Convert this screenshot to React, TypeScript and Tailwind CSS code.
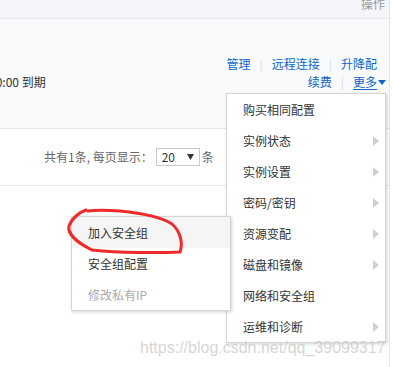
import React from "react";

const font = { fontFamily: '"Noto Sans CJK SC", "Noto Sans", sans-serif' };

function Arrow() {
  return (
    <svg width="6" height="10" viewBox="0 0 6 10" className="absolute right-[6px] top-1/2 -translate-y-1/2">
      <path d="M0 0 L6 5 L0 10 Z" fill="#d0d0d0" />
    </svg>
  );
}

const mainItems: { label: string; arrow: boolean }[] = [
  { label: "购买相同配置", arrow: false },
  { label: "实例状态", arrow: true },
  { label: "实例设置", arrow: true },
  { label: "密码/密钥", arrow: true },
  { label: "资源变配", arrow: true },
  { label: "磁盘和镜像", arrow: true },
  { label: "网络和安全组", arrow: false },
  { label: "运维和诊断", arrow: true },
];

export default function App() {
  return (
    <div className="relative w-[393px] h-[367px] overflow-hidden bg-white text-[12px]" style={font}>
      <div className="w-[390px] border-r border-[#e3e7ec] h-full">
        {/* header */}
        <div className="h-[19px] bg-[#f4f6f9] border-b border-[#e3e7ec] flex justify-end pr-[4px] overflow-hidden">
          <span className="text-[#9a9a9a] leading-[12px] -mt-[2px]">操作</span>
        </div>
        {/* row */}
        <div className="h-[110px] bg-[#f9fafc] border-b border-[#e3e7ec] flex justify-between">
          <div className="pt-[56px] overflow-hidden">
            <span className="block whitespace-nowrap ml-[-11px] text-[#333] leading-[14px]">00:00 到期</span>
          </div>
          <div className="flex flex-col items-end pt-[38px] pr-[12px] gap-[4px] leading-[14px]">
            <div className="flex items-center text-[#0e67c6]">
              <span>管理</span>
              <span className="mx-[9px] text-[#d8dce2]">|</span>
              <span>远程连接</span>
              <span className="mx-[9px] text-[#d8dce2]">|</span>
              <span>升降配</span>
            </div>
            <div className="flex items-center text-[#0e67c6] mr-[-9px]">
              <span>续费</span>
              <span className="mx-[9px] text-[#d8dce2]">|</span>
              <span className="underline underline-offset-[2px]">更多</span>
              <svg width="8" height="5" viewBox="0 0 8 5" className="ml-[1px]">
                <path d="M0 0 L8 0 L4 5 Z" fill="#0e67c6" />
              </svg>
            </div>
          </div>
        </div>
        {/* pagination */}
        <div className="h-[57px] bg-white border-b border-[#e3e7ec] flex items-center pl-[44px] text-[#666]">
          <span>共有1条, 每页显示：</span>
          <div className="ml-[3px] w-[44px] h-[18px] border border-[#c9c9c9] flex items-center justify-between px-[5px] text-[#333]">
            <span className="leading-[14px]">20</span>
            <svg width="7" height="6" viewBox="0 0 7 6">
              <path d="M0 0 L7 0 L3.5 6 Z" fill="#333" />
            </svg>
          </div>
          <span className="ml-[2px]">条</span>
        </div>
      </div>

      {/* main dropdown */}
      <div className="absolute left-[226px] top-[93px] w-[160px] bg-white border border-[#d6d6d6] shadow-[1px_1px_3px_rgba(0,0,0,0.18)]">
        {mainItems.map((it) => (
          <div key={it.label} className="relative h-[31px] flex items-center pl-[16px] text-[#333]">
            <span>{it.label}</span>
            {it.arrow && <Arrow />}
          </div>
        ))}
      </div>

      {/* submenu */}
      <div className="absolute left-[71px] top-[216px] w-[160px] bg-white border border-[#d6d6d6] shadow-[1px_1px_3px_rgba(0,0,0,0.18)]">
        <div className="h-[31px] flex items-center pl-[16px] bg-[#f5f5f5] text-[#333]">加入安全组</div>
        <div className="h-[31px] flex items-center pl-[16px] text-[#333]">安全组配置</div>
        <div className="h-[31px] flex items-center pl-[16px] text-[#aaa]">修改私有IP</div>
      </div>

      {/* red scribble */}
      <svg className="absolute left-0 top-0 pointer-events-none" width="393" height="367">
        <path
          d="M86 210 C 80 212, 72 218, 69 226 C 67 234, 78 243, 92 250 C 120 253, 160 253, 180 252 C 183 244, 181 232, 172 224 C 160 216, 140 213, 120 211 C 105 210, 95 210, 88 211"
          fill="none"
          stroke="#ee2a2a"
          strokeWidth="3"
          strokeLinecap="round"
        />
      </svg>

      {/* watermark */}
      <div
        className="absolute left-[140px] top-[338px] text-[16px] leading-[19px] text-[rgba(200,200,200,0.75)] whitespace-nowrap"
        style={{ fontFamily: '"Liberation Sans", Arial, sans-serif' }}
      >
        https://blog.csdn.net/qq_39099317
      </div>
    </div>
  );
}
